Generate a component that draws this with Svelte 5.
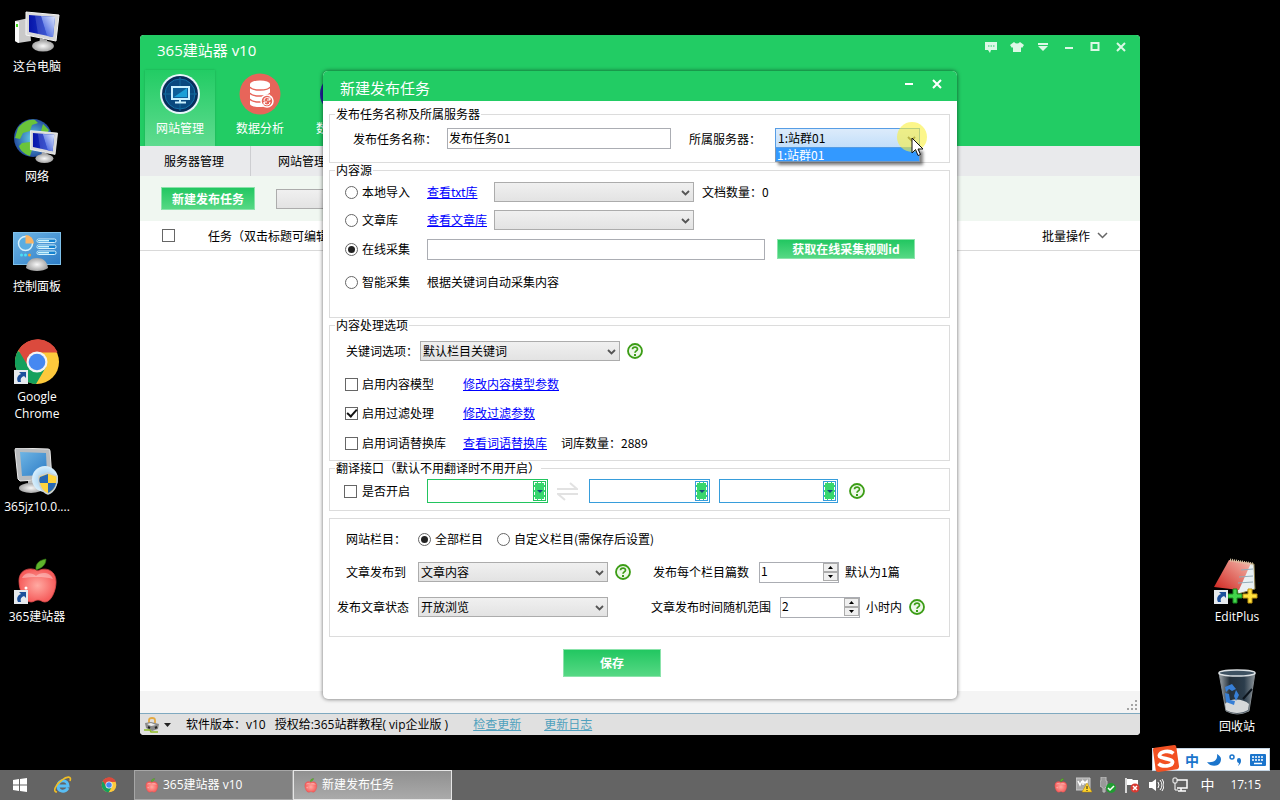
<script>
    let source = $state('online');
    let columns = $state('all');
    let useModel = $state(false);
    let useFilter = $state(true);
    let useReplace = $state(false);
    let useTranslate = $state(false);
    let taskName = $state('发布任务01');
    let perColumn = $state('1');
    let hours = $state('2');

    const shortcuts = [
        { label: '这台电脑', icon: 'computer' },
        { label: '网络', icon: 'network' },
        { label: '控制面板', icon: 'panel' },
        { label: 'Google Chrome', icon: 'chrome', link: true },
        { label: '365jz10.0....', icon: 'installer' },
        { label: '365建站器', icon: 'apple', link: true }
    ];

    const rightShortcuts = [
        { label: 'EditPlus', icon: 'editplus', link: true },
        { label: '回收站', icon: 'bin' }
    ];

    const modules = [
        { label: '网站管理', icon: 'site' },
        { label: '数据分析', icon: 'data' },
        { label: '数据采集', icon: 'collect' }
    ];
</script>

{#snippet monitor()}
    <path d="M3 2 36 5 33 31 3 25Z" fill="#d9d9d9" stroke="#f4f4f4" />
    <path d="M6 5 32 7 30 27 6 22Z" fill="url(#screen)" />
    <path d="M12 5.500 18 6 24 26 15 24Z" fill="#fff" opacity=".15" />
    <path d="M32 7 30 27 24 26 18 6Z" fill="url(#shine)" />
    <path d="M17 28 24 30 24 34 16 34Z" fill="#aaa" />
    <ellipse cx="20" cy="36" rx="11" ry="5.500" fill="url(#metal)" />
{/snippet}

{#snippet chrome()}
    <circle cx="24" cy="24" r="22" fill="#fdc93c" />
    <path d="M24 24 4.900 13A22 22 0 0 0 23 46L33 29Z" fill="#14a05c" />
    <path d="M24 24 5.500 12.200A22 22 0 0 1 44.500 14.500H24Z" fill="#db4a3d" />
    <path d="M5.500 12.200 15 28 24 14H44.500A22 22 0 0 0 5.500 12.200Z" fill="#db4a3d" />
    <circle cx="24" cy="24" r="10.500" fill="#f4f4f4" />
    <circle cx="24" cy="24" r="8.300" fill="#4688f1" />
{/snippet}

{#snippet apple()}
    <path d="M25 13c-6-4-19-3-19 10 0 10 6 21 12 21 3 0 4-2 7-2s4 2 7 2c6 0 11-11 11-20 0-13-12-15-18-11Z" fill="url(#appleFill)" stroke="#e0494a" stroke-width=".8" />
    <path d="M9 20c2-6 10-6 14-2 4-4 14-5 17 3-10-3-22-2-31-1Z" fill="#fff" opacity=".35" />
    <path d="M23 12C22 5 27 2 33 1c0 6-4 9-10 11Z" fill="#5fb32c" stroke="#327713" stroke-width=".6" />
    <circle cx="13" cy="30" r="1.500" fill="#fff" />
{/snippet}

{#snippet bigIcon(name, link)}
    <svg width="48" height="48" viewBox="0 0 48 48" aria-hidden="true">
        {#if name === 'computer'}
            <path d="M2 13 16 10 18 33 5 35 2 33Z" fill="#c9c9c9" />
            <path d="M2 13 6 14 6 35 2 33Z" fill="#fafafa" />
            <rect x="3" y="16" width="2" height="3" fill="#42d81c" />
            <g transform="translate(10 2)">{@render monitor()}</g>
        {:else if name === 'network'}
            <circle cx="20" cy="20" r="19" fill="url(#globe)" />
            <path d="M5 10c5-6 10-9 17-8l3 3-6 2-2 6-7 2-3 6-5-1Z M9 25l8-1 3 5-3 9c-6-2-10-6-11-10Z M30 6l6 6-3 5-5-4Z" fill="#6ac43a" />
            <g transform="translate(15 11) scale(.82)">{@render monitor()}</g>
        {:else if name === 'panel'}
            <rect x="0.500" y="4.500" width="47" height="32" fill="url(#panelFill)" stroke="#7ec0ea" />
            <circle cx="12.500" cy="15.500" r="7" fill="#59ade2" stroke="#d6f1fc" stroke-width="1.500" />
            <path d="M12.500 15.500V7a8.500 8.500 0 0 1 8.500 8.500Z" fill="#f9b566" />
            {#each [11, 17, 23] as y}
                <rect x="24" {y} width="19" height="3.500" rx="1.500" fill="#1583d0" stroke="#d6f1fc" />
                <rect x="25" y={y + 1} width="11" height="1.500" fill="#c9f2fc" />
            {/each}
            <circle cx="8.500" cy="27" r="1.500" fill="#4ae0f4" />
            <circle cx="12.500" cy="27" r="1.500" fill="#4ae0f4" />
            <circle cx="16.500" cy="27" r="1.500" fill="#f9a030" />
            <path d="M13 40c1-7 5-10 11-10s10 3 11 10c-5 4-17 4-22 0Z" fill="url(#metal)" />
        {:else if name === 'chrome'}
            {@render chrome()}
        {:else if name === 'installer'}
            <path d="M2 2Q2 0 4 0L35 1Q37 1 37 3L39 31 7 33 5 31Z" fill="#b9bcbf" stroke="#e9e9e9" />
            <path d="M7 4 33 5 34 27 9 28Z" fill="url(#panelFill)" />
            <path d="M15 33h7v6h-7Z" fill="#bbb" />
            <ellipse cx="18" cy="40" rx="12" ry="5" fill="url(#metal)" />
            <circle cx="32" cy="31" r="13" fill="url(#disc)" />
            <path d="M35 25 44 28C45 37 41 44 35 46 29 44 25 37 26 28Z" fill="#ffd43d" stroke="#c8d0d5" stroke-width="1.500" />
            <path d="M35 26v9h-8c-1-2-1-4 0-6Z M35 35h8c-1 5-4 8-8 10Z" fill="#2768b5" />
        {:else if name === 'apple'}
            {@render apple()}
        {:else if name === 'editplus'}
            <path d="M20 3 41 6 42 31 25 36Z" fill="#e9f0f3" stroke="#8a7a48" />
            <path d="M16 2 38 5 26 32 1 29Z" fill="url(#note)" />
            <path d="M17 2 40 6" stroke="#d8c6a5" stroke-width="3" stroke-dasharray="1 1" />
            <path d="M28 12 40 11M26 19l14-1M25 25l15-1" stroke="#92abb9" />
            <path d="M20 31h4v5h5v4h-5v5h-4v-5h-5v-4h5Z" fill="#42d34b" stroke="#178b1f" />
            <path d="M35 31h4v5h5v4h-5v5h-4v-5h-5v-4h5Z" fill="#ffe13d" stroke="#c29613" />
        {:else}
            <path d="M6 5 42 5 36 43Q24 49 13 43Z" fill="url(#binFill)" stroke="#848b90" />
            <ellipse cx="24" cy="5" rx="18" ry="3" fill="#3e5262" stroke="#dce1e4" stroke-width="1.500" />
            <path d="M12 36c4-6 18-6 24 0l-1 6c-6 4-16 4-22 0Z" fill="#d5d8da" />
            <path d="M12 19l7-3 4 5-4 2-3-2-3 3Z M12 25l4 1 1 6 5 1-1 4-8-3Z M23 22l3 5-3 6-2-5Z" fill="#377fd6" />
            <path d="M30 31 39 21" stroke="#0c141c" stroke-width="2" />
        {/if}
        {#if link}
            <rect x="1" y="32" width="14" height="14" fill="#e6eaee" />
            <path d="M5 44c-2-4 0-7 3-8l-2-2h7v6l-2-2c-3 1-4 3-3 6Z" fill="#1c509c" />
        {/if}
    </svg>
{/snippet}

{#snippet help()}
    <button class="help" type="button" aria-label="帮助">
        <svg width="16" height="16" viewBox="0 0 16 16">
            <circle cx="8" cy="8" r="7" fill="#eef8e9" stroke="#3c9d16" stroke-width="1.800" />
            <path d="M5.500 6.300C5.600 3.300 10.600 3.400 10.500 6.200 10.400 7.800 8 8 8 9.700" fill="none" stroke="#3c9d16" stroke-width="1.700" />
            <rect x="7" y="11" width="2" height="2" fill="#3c9d16" />
        </svg>
    </button>
{/snippet}

{#snippet arrow()}
    <svg class="arrow" width="9" height="6" viewBox="0 0 9 6" aria-hidden="true">
        <path d="M1 1 4.500 4.500 8 1" fill="none" stroke="#555" stroke-width="1.800" />
    </svg>
{/snippet}

{#snippet combo(label, text, size)}
    <span class="combo {size}">
        <select aria-label={label}><option>{text}</option></select>
        {@render arrow()}
    </span>
{/snippet}

{#snippet langBox(label, tone)}
    <span class="lang {tone}">
        <select aria-label={label}><option></option></select>
        <span class="lang-button"></span>
    </span>
{/snippet}

{#snippet spinArrows()}
    <span class="spin-arrows" aria-hidden="true">
        <span><svg width="5" height="3" viewBox="0 0 5 3"><path d="M0 3 2.500 0 5 3Z" /></svg></span>
        <span><svg width="5" height="3" viewBox="0 0 5 3"><path d="M0 0 2.500 3 5 0Z" /></svg></span>
    </span>
{/snippet}

<svg class="defs" width="0" height="0" aria-hidden="true">
    <defs>
        <linearGradient id="screen"><stop stop-color="#0714a8" /><stop offset="1" stop-color="#2148d8" /></linearGradient>
        <linearGradient id="shine" x1="0" y1="1" x2="1" y2="0"><stop stop-color="#2345d8" /><stop offset="1" stop-color="#dfe9ff" /></linearGradient>
        <radialGradient id="metal"><stop stop-color="#f8f8f8" /><stop offset="1" stop-color="#a5a5a5" /></radialGradient>
        <radialGradient id="globe"><stop stop-color="#67d5ec" /><stop offset="1" stop-color="#244ea0" /></radialGradient>
        <radialGradient id="disc"><stop stop-color="#8cc4ee" /><stop offset="1" stop-color="#d9effc" /></radialGradient>
        <radialGradient id="appleFill"><stop stop-color="#ffaaa2" /><stop offset="1" stop-color="#f65d5c" /></radialGradient>
        <linearGradient id="panelFill" x1="0" y1="0" x2="1" y2="1"><stop stop-color="#6fb5e4" /><stop offset="1" stop-color="#2c7cc6" /></linearGradient>
        <linearGradient id="note" x1="1" y1="0" x2="0" y2="1"><stop stop-color="#f5bcb0" /><stop offset="1" stop-color="#cf231d" /></linearGradient>
        <linearGradient id="binFill"><stop stop-color="#a2a9ae" /><stop offset=".3" stop-color="#24303a" /><stop offset=".7" stop-color="#2b3d4c" /><stop offset="1" stop-color="#8d959a" /></linearGradient>
    </defs>
</svg>

<div class="desktop">
    <main class="workspace">
        <nav class="shortcuts">
            {#each shortcuts as item}
                <button type="button" class="shortcut">
                    {@render bigIcon(item.icon, item.link)}
                    <span>{item.label}</span>
                </button>
            {/each}
        </nav>

        <nav class="shortcuts right">
            {#each rightShortcuts as item}
                <button type="button" class="shortcut">
                    {@render bigIcon(item.icon, item.link)}
                    <span>{item.label}</span>
                </button>
            {/each}
        </nav>

        <!-- Main application window -->
        <section class="app-window">
            <header class="app-header">
                <div class="app-title">
                    <h1>365建站器 v10</h1>
                    <div class="window-tools">
                        <button type="button" aria-label="消息"><svg width="12" height="12" viewBox="0 0 12 12"><path d="M0 1h12v8H6l-1 3-2-3H0Z" fill="currentColor" /><path d="M3 5h1.500M5.500 5H7M8 5h1.500" stroke="#22cc64" /></svg></button>
                        <button type="button" aria-label="皮肤"><svg width="14" height="12" viewBox="0 0 14 12"><path d="M4 1q3 3 6 0l4 3-2 3-1-1v5H3V6L2 7 0 4Z" fill="currentColor" /></svg></button>
                        <button type="button" aria-label="菜单"><svg width="10" height="10" viewBox="0 0 10 10"><path d="M0 1h10v2H0ZM0 4h10L5 9Z" fill="currentColor" /></svg></button>
                        <button type="button" aria-label="最小化"><svg width="10" height="10" viewBox="0 0 10 10"><path d="M1 6h8" stroke="currentColor" stroke-width="2" /></svg></button>
                        <button type="button" aria-label="最大化"><svg width="10" height="10" viewBox="0 0 10 10"><rect x="1.500" y="1" width="7" height="7" fill="none" stroke="currentColor" stroke-width="2" /></svg></button>
                        <button type="button" aria-label="关闭"><svg width="10" height="10" viewBox="0 0 10 10"><path d="m1 1 8 8M9 1 1 9" stroke="currentColor" stroke-width="2" /></svg></button>
                    </div>
                </div>
                <nav class="modules">
                    {#each modules as item, index}
                        <button type="button" class:active={index === 0}>
                            <svg width="42" height="42" viewBox="0 0 42 42" aria-hidden="true">
                                {#if item.icon === 'site'}
                                    <circle cx="21" cy="21" r="20" fill="#e8f5fb" />
                                    <circle cx="21" cy="21" r="18" fill="#082e5c" />
                                    <circle cx="21" cy="21" r="15" fill="#09497f" stroke="#1472a8" />
                                    <path d="M21 4v34M4 21h34" stroke="#126a9b" />
                                    <path d="M13 14h17v12H13ZM21 26v3M16 29.500h11" fill="#0d5f98" stroke="#c9f1ff" stroke-width="2" />
                                    <path d="m15 24 13-9v9Z" fill="#1aa0d7" />
                                {:else if item.icon === 'data'}
                                    <circle cx="21" cy="21" r="20.500" fill="#e7655a" />
                                    <path d="M11 11v20c0 4 20 4 20 0V11Z" fill="#fff" />
                                    <ellipse cx="21" cy="11" rx="10" ry="3.500" fill="#fff" />
                                    <path d="M11 14c2 4 18 4 20 0M11 20c2 4 18 4 20 0M11 26c2 4 18 4 20 0" fill="none" stroke="#e7655a" stroke-width="1.500" />
                                    <circle cx="28" cy="28" r="6" fill="#e7655a" stroke="#fff" stroke-width="1.500" />
                                    <path d="M25 28a3 3 0 0 1 6-1M31 29a3 3 0 0 1-6 0M31 24v3h-3M25 32v-3h3" fill="none" stroke="#fff" />
                                {:else}
                                    <circle cx="21" cy="21" r="20" fill="#20219a" />
                                {/if}
                            </svg>
                            <span>{item.label}</span>
                        </button>
                    {/each}
                </nav>
            </header>
            <nav class="subnav">
                <a href="#servers">服务器管理</a>
                <a href="#sites">网站管理</a>
            </nav>
            <div class="toolbar">
                <button type="button" class="green-button new-task">新建发布任务</button>
                <span class="combo wide"><select aria-label="筛选"><option></option></select></span>
            </div>
            <div class="list-head">
                <input type="checkbox" aria-label="全选" />
                <span class="head-title">任务（双击标题可编辑）</span>
                <button type="button" class="batch">批量操作
                    <svg width="11" height="7" viewBox="0 0 11 7"><path d="m1 1 4.500 4.500L10 1" fill="none" stroke="#666" stroke-width="1.500" /></svg>
                </button>
            </div>
            <div class="list-body"></div>
            <div class="grip-row">
                <svg width="11" height="11" viewBox="0 0 11 11" aria-hidden="true"><path d="M8 0h2v2H8ZM8 4h2v2H8ZM8 8h2v2H8ZM4 4h2v2H4ZM4 8h2v2H4ZM0 8h2v2H0Z" fill="#a3a3a3" /></svg>
            </div>
            <footer class="status">
                <button type="button" class="lock" aria-label="授权">
                    <svg width="16" height="16" viewBox="0 0 16 16"><path d="M5 6V3q0-2 3-2t3 2v3" fill="none" stroke="#e3a942" stroke-width="1.800" /><path d="M1 6l6-1 8 2-1 5-6 2-6-3Z" fill="#8a8a8a" /><path d="M3 7l4-1 5 2-5 1Z" fill="#eee" /><path d="m4 10 2 1M11 11l2-1" stroke="#222" stroke-width="2" /><path d="M0 13h6l1 2h7" fill="none" stroke="#90bd27" stroke-width="1.500" /></svg>
                    <svg width="7" height="4" viewBox="0 0 7 4"><path d="M0 0h7L3.500 4Z" fill="#222" /></svg>
                </button>
                <span>软件版本：v10</span>
                <span>授权给:365站群教程( vip企业版 )</span>
                <a href="#update">检查更新</a>
                <a href="#log">更新日志</a>
            </footer>
        </section>

        <!-- New task dialog -->
        <form class="dialog" onsubmit={(e) => e.preventDefault()}>
            <header class="dialog-title">
                <h2>新建发布任务</h2>
                <button type="button" aria-label="最小化"><svg width="10" height="10" viewBox="0 0 10 10"><path d="M1 5h8" stroke="currentColor" stroke-width="2" /></svg></button>
                <button type="button" aria-label="关闭"><svg width="10" height="10" viewBox="0 0 10 10"><path d="m1 1 8 8M9 1 1 9" stroke="currentColor" stroke-width="2" /></svg></button>
            </header>

            <div class="dialog-body">
                <fieldset class="name-group">
                    <legend>发布任务名称及所属服务器</legend>
                    <div class="row">
                        <label class="name-label" for="task-name">发布任务名称：</label>
                        <input id="task-name" class="text name-input" type="text" bind:value={taskName} />
                        <label class="server-label" for="server">所属服务器：</label>
                        <span class="combo server">
                            <select id="server"><option>1:站群01</option></select>
                            {@render arrow()}
                            <ul class="options"><li>1:站群01</li></ul>
                            <span class="click-halo"></span>
                            <svg class="pointer" width="13" height="20" viewBox="0 0 13 20" aria-hidden="true">
                                <path d="M1 1v15l3.500-3.500L7 18.500l2.500-1L7 12h5Z" fill="#fff" stroke="#111" />
                            </svg>
                        </span>
                    </div>
                </fieldset>

                <fieldset class="source-group">
                    <legend>内容源</legend>
                    <div class="row h30">
                        <label class="choice"><input type="radio" value="local" bind:group={source} />本地导入</label>
                        <span class="view-link"><a href="#txt">查看txt库</a></span>
                        {@render combo('txt库', '', 'w200')}
                        <span class="after-combo">文档数量：0</span>
                    </div>
                    <div class="row h26">
                        <label class="choice"><input type="radio" value="library" bind:group={source} />文章库</label>
                        <span class="view-link"><a href="#articles">查看文章库</a></span>
                        {@render combo('文章库', '', 'w200')}
                    </div>
                    <div class="row h32">
                        <label class="choice"><input type="radio" value="online" bind:group={source} />在线采集</label>
                        <input class="text rule-input" type="text" aria-label="在线采集规则" />
                        <button type="button" class="green-button rule-button">获取在线采集规则id</button>
                    </div>
                    <div class="row h34">
                        <label class="choice"><input type="radio" value="smart" bind:group={source} />智能采集</label>
                        <span>根据关键词自动采集内容</span>
                    </div>
                </fieldset>

                <fieldset class="process-group">
                    <legend>内容处理选项</legend>
                    <div class="row h38">
                        <span class="keyword-label">关键词选项：</span>
                        {@render combo('关键词选项', '默认栏目关键词', 'w200')}
                        {@render help()}
                    </div>
                    <div class="row h28">
                        <label class="choice long"><input type="checkbox" bind:checked={useModel} />启用内容模型</label>
                        <a href="#model">修改内容模型参数</a>
                    </div>
                    <div class="row h30">
                        <label class="choice long"><input type="checkbox" bind:checked={useFilter} />启用过滤处理</label>
                        <a href="#filter">修改过滤参数</a>
                    </div>
                    <div class="row h30">
                        <label class="choice long"><input type="checkbox" bind:checked={useReplace} />启用词语替换库</label>
                        <a href="#words">查看词语替换库</a>
                        <span class="word-count">词库数量：2889</span>
                    </div>
                </fieldset>

                <fieldset class="translate-group">
                    <legend>翻译接口（默认不用翻译时不用开启）</legend>
                    <div class="row h32">
                        <label class="choice"><input type="checkbox" bind:checked={useTranslate} />是否开启</label>
                        {@render langBox('源语言', 'green')}
                        <svg class="swap" width="21" height="19" viewBox="0 0 21 19" aria-hidden="true">
                            <path d="M0 7h20L13 1M21 12H1l7 6" fill="none" stroke="#e2e2e2" stroke-width="2" />
                        </svg>
                        {@render langBox('中间语言', 'blue')}
                        {@render langBox('目标语言', 'blue last')}
                        {@render help()}
                    </div>
                </fieldset>

                <fieldset class="publish-group">
                    <div class="row h34">
                        <span class="publish-label inset">网站栏目：</span>
                        <label class="choice auto"><input type="radio" value="all" bind:group={columns} />全部栏目</label>
                        <label class="choice auto"><input type="radio" value="custom" bind:group={columns} />自定义栏目(需保存后设置)</label>
                    </div>
                    <div class="row h32">
                        <span class="publish-label inset">文章发布到</span>
                        {@render combo('文章发布到', '文章内容', 'w190')}
                        {@render help()}
                        <label class="count-label" for="per-column">发布每个栏目篇数</label>
                        <span class="spin"><input id="per-column" type="text" bind:value={perColumn} />{@render spinArrows()}</span>
                        <span class="unit">默认为1篇</span>
                    </div>
                    <div class="row h38">
                        <span class="publish-label">发布文章状态</span>
                        {@render combo('发布文章状态', '开放浏览', 'w190')}
                        <label class="time-label" for="hours">文章发布时间随机范围</label>
                        <span class="spin"><input id="hours" type="text" bind:value={hours} />{@render spinArrows()}</span>
                        <span class="unit">小时内</span>
                        {@render help()}
                    </div>
                </fieldset>

                <button type="submit" class="green-button save">保存</button>
            </div>
        </form>

        <!-- Input method bar -->
        <aside class="ime">
            <svg class="ime-logo" width="28" height="28" viewBox="0 0 30 30" aria-hidden="true">
                <path d="M1 5Q1 3 3 3L24 0Q26 0 26 2L29 23Q29 25 27 26L7 29Q5 29 4 27Z" fill="#f25022" />
                <path d="M23 9C18 5 9 7 8 11c-1 4 14 3 14 7 0 5-11 6-15 2" fill="none" stroke="#fff" stroke-width="4" />
            </svg>
            <b>中</b>
            <svg width="14" height="14" viewBox="0 0 14 14"><path d="M10 1c1 6-3 9-10 8 4 6 14 5 14-3 0-2-2-4-4-5Z" fill="#1b75cc" /></svg>
            <svg width="13" height="12" viewBox="0 0 13 12"><circle cx="3" cy="3" r="2" fill="none" stroke="#1b75cc" stroke-width="1.500" /><path d="M8 6q0-2 2-2t2 3q0 3-3 5 1-2 1-3-2 0-2-3Z" fill="#1b75cc" /></svg>
            <svg width="16" height="12" viewBox="0 0 16 12"><rect width="16" height="12" rx="1" fill="#1b75cc" /><path d="M2 3h12M2 6h12" stroke="#fff" stroke-width="1.500" stroke-dasharray="2 1" /><path d="M4 9.500h8" stroke="#fff" stroke-width="1.500" /></svg>
        </aside>
    </main>

    <footer class="taskbar">
        <button type="button" class="quick" aria-label="开始">
            <svg width="14" height="14" viewBox="0 0 14 14"><path d="M0 2 6 1v5.500H0ZM7 1l7-1v6.500H7ZM0 7.500h6V13L0 12ZM7 7.500h7V14l-7-1Z" fill="#fff" /></svg>
        </button>
        <button type="button" class="quick" aria-label="Internet Explorer">
            <svg width="18" height="18" viewBox="0 0 18 18"><path d="M14 12c-3 5-10 4-10-2 0-7 10-7 10 0H4" fill="none" stroke="#58bdf3" stroke-width="3" /><path d="M3 16c-5 0-1-8 5-12 5-4 10-4 8 1" fill="none" stroke="#f1be24" stroke-width="1.600" /></svg>
        </button>
        <button type="button" class="quick" aria-label="Chrome">
            <svg width="16" height="16" viewBox="0 0 48 48">{@render chrome()}</svg>
        </button>
        <button type="button" class="task"><svg width="14" height="15" viewBox="4 0 42 46">{@render apple()}</svg>365建站器 v10</button>
        <button type="button" class="task active"><svg width="14" height="15" viewBox="4 0 42 46">{@render apple()}</svg>新建发布任务</button>
        <div class="tray">
            <svg width="14" height="15" viewBox="4 0 42 46">{@render apple()}</svg>
            <svg width="16" height="16" viewBox="0 0 16 16"><path d="M0 1h14v12H0Z" fill="#aaa" stroke="#ccc" /><path d="m2 4 2 4 2-4M7 8V4l2 2 2-2v4" fill="none" stroke="#fff" stroke-width="1.500" /><path d="m11 6 5 9H6Z" fill="#ffd52d" stroke="#b88700" stroke-width=".5" /><path d="M11 9v3M11 13v1" stroke="#222" /></svg>
            <svg width="16" height="16" viewBox="0 0 16 16"><path d="M1 0h5v4h1v5L5 11v4H3v-4L0 9V4h1Z" fill="#999" stroke="#bbb" /><circle cx="11" cy="11" r="5" fill="#209d31" /><path d="m8 11 2 2 4-4" fill="none" stroke="#fff" stroke-width="1.500" /></svg>
            <svg width="16" height="16" viewBox="0 0 16 16"><path d="M2 1v15" stroke="#fff" stroke-width="1.500" /><path d="M3 2h5l1 1h5v6H9L8 8H3Z" fill="#fff" /><circle cx="11" cy="11" r="4.500" fill="#d93a32" /><path d="m9 9 4 4M13 9l-4 4" stroke="#fff" stroke-width="1.500" /></svg>
            <svg width="16" height="16" viewBox="0 0 16 16"><path d="M1 5h3l4-3v12l-4-3H1Z" fill="#fff" /><path d="M10 5q2 3 0 6M12 3q4 5 0 10M14 2q4 6 0 12" fill="none" stroke="#fff" /></svg>
            <svg width="16" height="16" viewBox="0 0 16 16"><path d="M5 3h10v8H5M9 11v3M6 14h8" fill="none" stroke="#fff" stroke-width="1.500" /><rect x="1" y="1" width="4" height="5" rx="1" fill="#666" stroke="#fff" /><path d="M3 6v7h3" fill="none" stroke="#fff" /></svg>
            <span class="ime-mode">中</span>
            <time>17:15</time>
        </div>
    </footer>
</div>

<style>
    :global(body) {
        margin: 0;
        background: #000;
    }

    * {
        box-sizing: border-box;
    }

    .defs {
        position: absolute;
    }

    .desktop {
        display: flex;
        flex-direction: column;
        height: 100vh;
        overflow: hidden;
        background: #000;
        color: #000;
        font: 12px/16px "Noto Sans CJK SC", sans-serif;
    }

    button,
    input,
    select {
        margin: 0;
        padding: 0;
        border: 0;
        border-radius: 0;
        background: none;
        color: inherit;
        font: inherit;
    }

    svg {
        display: block;
        flex-shrink: 0;
    }

    .workspace {
        position: relative;
        flex: 1;
        min-height: 0;
    }

    /* Desktop shortcuts */
    .shortcuts {
        display: flex;
        flex-direction: column;
        width: 74px;
        padding-top: 2px;
    }

    .shortcuts.right {
        position: absolute;
        top: 550px;
        right: 6px;
    }

    .shortcut {
        display: flex;
        flex-direction: column;
        align-items: center;
        gap: 2px;
        height: 110px;
        padding-top: 6px;
        color: #fff;
        font: 12px/17px "Open Sans", "Noto Sans CJK SC", sans-serif;
    }

    /* Application window */
    .app-window {
        position: absolute;
        inset: 35px 140px;
        display: flex;
        flex-direction: column;
        overflow: hidden;
        border-radius: 4px;
        background: #fff;
    }

    .app-header {
        height: 111px;
        background: #22cc64;
        color: #fff;
    }

    .app-title {
        display: flex;
        align-items: flex-start;
        justify-content: space-between;
        height: 35px;
        padding: 5px 12px 0 17px;
    }

    h1,
    h2 {
        margin: 0;
        font: 15px/20px "Open Sans", "Noto Sans CJK SC", sans-serif;
    }

    .window-tools {
        display: flex;
        gap: 11px;
        color: #dcf8e6;
    }

    .window-tools button,
    .dialog-title button {
        display: flex;
        align-items: center;
        justify-content: center;
        width: 15px;
        height: 14px;
    }

    .modules {
        display: flex;
        gap: 10px;
        padding-left: 5px;
    }

    .modules button {
        display: flex;
        flex-direction: column;
        align-items: center;
        gap: 5px;
        width: 70px;
        height: 76px;
        padding: 3px 0 0;
    }

    .modules .active {
        background: linear-gradient(#22cc64, #5fdb8f);
        box-shadow: 0 0 2px #1ba851;
    }

    .subnav {
        display: flex;
        height: 30px;
        background: #e9eaec;
    }

    .subnav a {
        padding: 7px 26px 7px 24px;
        border-right: 1px solid #cdced1;
        color: #000;
        text-decoration: none;
    }

    .subnav a:last-child {
        padding-left: 27px;
    }

    .toolbar {
        display: flex;
        align-items: center;
        gap: 21px;
        height: 45px;
        padding-left: 21px;
        background: #f0f7f1;
    }

    .green-button {
        border: 1px solid #8be3ab;
        background: linear-gradient(#22c761, #56d884);
        color: #fff;
        font-weight: 700;
    }

    .new-task {
        width: 94px;
        height: 23px;
    }

    .list-head {
        display: flex;
        align-items: center;
        height: 30px;
        padding: 0 32px 0 22px;
        border-bottom: 1px solid #d9d9d9;
    }

    .head-title {
        flex: 1;
        margin-left: 33px;
    }

    .batch {
        display: flex;
        align-items: center;
        gap: 7px;
    }

    .list-body {
        flex: 1;
    }

    .grip-row {
        display: flex;
        align-items: flex-end;
        justify-content: flex-end;
        height: 22px;
        padding: 2px;
        background: #f4f4f4;
    }

    .status {
        display: flex;
        align-items: center;
        height: 22px;
        padding-left: 4px;
        border-top: 1px solid #7fa9c0;
        background: #e0e0e0;
        font-family: "Open Sans", "Noto Sans CJK SC", sans-serif;
    }

    .lock {
        display: flex;
        align-items: center;
        gap: 4px;
        width: 42px;
    }

    .status span {
        margin-right: 9px;
    }

    .status a {
        margin: 0 7px 0 16px;
        color: #4fa0bd;
    }

    /* Dialog */
    .dialog {
        position: absolute;
        top: 71px;
        left: 50%;
        width: 634px;
        transform: translateX(-50%);
        border-radius: 5px;
        background: #fff;
        box-shadow: 0 0 4px rgba(0, 0, 0, 0.6);
    }

    .dialog-title {
        display: flex;
        gap: 13px;
        height: 30px;
        padding: 6px 13px 0 17px;
        border-radius: 5px 5px 0 0;
        background: #22cc64;
        color: #fff;
    }

    .dialog-title h2 {
        flex: 1;
        line-height: 22px;
    }

    .dialog-body {
        padding: 6px 7px 22px 6px;
    }

    fieldset {
        min-width: 0;
        margin: 0;
        padding: 0;
        border: 1px solid #dcdcdc;
    }

    legend {
        margin-left: 5px;
        padding: 0 1px;
        line-height: 14px;
    }

    .row {
        display: flex;
        align-items: center;
        padding-left: 15px;
    }

    .name-group {
        padding: 7px 0 13px;
    }

    .name-group .row {
        align-items: flex-start;
        padding-left: 23px;
    }

    .name-group label {
        line-height: 21px;
    }

    .source-group {
        padding-bottom: 18px;
    }

    .process-group {
        padding-bottom: 2px;
    }

    .translate-group {
        padding-bottom: 3px;
    }

    .translate-group .row {
        padding-left: 14px;
    }

    .publish-group {
        margin-top: 7px;
        padding: 3px 0 10px;
    }

    .publish-group .row {
        padding-left: 7px;
    }

    .h26 { height: 26px; }
    .h28 { height: 28px; }
    .h30 { height: 30px; }
    .h32 { height: 32px; }
    .h34 { height: 34px; }
    .h38 { height: 38px; }

    .dialog a {
        color: #00f;
    }

    .name-label {
        width: 94px;
    }

    .server-label {
        width: 86px;
        margin-left: 18px;
    }

    .text {
        height: 21px;
        padding: 0 1px 3px;
        border: 1px solid #abadb3;
        background: #fff;
    }

    .name-input {
        width: 224px;
    }

    .rule-input {
        width: 338px;
    }

    .rule-button {
        width: 138px;
        height: 20px;
        margin-left: 12px;
        line-height: 18px;
    }

    .choice {
        display: flex;
        align-items: center;
        gap: 4px;
        width: 82px;
    }

    .choice.long {
        width: 118px;
    }

    .translate-group .choice {
        width: 83px;
        gap: 5px;
    }

    .choice.auto {
        width: auto;
        margin-right: 14px;
    }

    input[type='radio'],
    input[type='checkbox'] {
        display: grid;
        place-items: center;
        width: 13px;
        height: 13px;
        appearance: none;
        border: 1px solid #666;
        background: #fff;
    }

    input[type='radio'] {
        border-radius: 50%;
    }

    input[type='radio']:checked::after {
        width: 7px;
        height: 7px;
        border-radius: 50%;
        background: #222;
        content: '';
    }

    input[type='checkbox']:checked::after {
        width: 8px;
        height: 4px;
        margin-bottom: 3px;
        border: solid #111;
        border-width: 0 0 2px 2px;
        transform: rotate(-48deg);
        content: '';
    }

    .view-link {
        width: 67px;
    }

    .after-combo {
        margin-left: 8px;
    }

    .combo {
        position: relative;
        height: 20px;
    }

    .combo select {
        display: block;
        width: 100%;
        height: 100%;
        padding: 0 16px 0 2px;
        appearance: none;
        border: 1px solid #acacac;
        background: linear-gradient(#f0f0f0, #e3e3e3);
    }

    .arrow {
        position: absolute;
        top: 8px;
        right: 4px;
        pointer-events: none;
    }

    .w190 { width: 190px; }
    .w200,
    .wide { width: 200px; }

    .server {
        width: 145px;
    }

    .server select {
        border-color: #569de5;
        background: linear-gradient(#dcebfb, #c3dffa);
    }

    .options {
        position: absolute;
        top: 20px;
        left: 0;
        z-index: 1;
        width: 100%;
        margin: 0;
        padding: 0 1px;
        border: solid #7b97b5;
        border-width: 0 1px 1px;
        background: #3399ff;
        box-shadow: 3px 3px 3px rgba(0, 0, 0, 0.5);
        color: #fff;
        line-height: 13px;
        list-style: none;
    }

    .click-halo {
        position: absolute;
        top: -6px;
        right: -7px;
        z-index: 2;
        width: 30px;
        height: 30px;
        border-radius: 50%;
        background: rgba(250, 240, 60, 0.6);
    }

    .pointer {
        position: absolute;
        top: 9px;
        right: -4px;
        z-index: 3;
    }

    .keyword-label {
        width: 75px;
        padding-left: 1px;
    }

    .help {
        margin-left: 7px;
    }

    .word-count {
        margin-left: 14px;
    }

    .lang {
        position: relative;
        width: 121px;
        height: 24px;
        padding: 1px;
        border: 1px solid #22c45f;
    }

    .lang.blue {
        border-color: #379ddb;
    }

    .lang.last {
        width: 119px;
        margin: 0 4px 0 9px;
    }

    .lang select {
        width: 100%;
        height: 100%;
        appearance: none;
    }

    .lang-button {
        position: absolute;
        top: 2px;
        right: 2px;
        display: grid;
        place-items: center;
        width: 11px;
        height: 18px;
        border: 1px dashed #fff;
        outline: 1px solid #22c45f;
        background: #38d66e;
        pointer-events: none;
    }

    .blue .lang-button {
        outline-color: #379ddb;
    }

    .lang-button::after {
        border: solid transparent;
        border-width: 3px 3px 0;
        border-top-color: #15507c;
        content: '';
    }

    .swap {
        margin: 0 11px 0 9px;
    }

    .publish-label {
        width: 81px;
        white-space: nowrap;
    }

    .publish-label.inset {
        padding-left: 9px;
    }

    .count-label {
        width: 106px;
        margin-left: 22px;
    }

    .time-label {
        width: 129px;
        margin-left: 43px;
    }

    .spin {
        display: flex;
        width: 80px;
        height: 21px;
        border: 1px solid #abadb3;
    }

    .spin input {
        flex: 1;
        min-width: 0;
        padding: 0 0 3px 1px;
    }

    .spin-arrows {
        display: flex;
        flex-direction: column;
        width: 15px;
        height: 18px;
    }

    .spin-arrows span {
        display: grid;
        flex: 1;
        place-items: center;
        border: 1px solid #acacac;
        background: #efefef;
    }

    .unit {
        margin-left: 6px;
    }

    .save {
        display: block;
        width: 98px;
        height: 28px;
        margin: 12px 0 0 234px;
    }

    /* Input method bar */
    .ime {
        position: absolute;
        right: 10px;
        bottom: -1px;
        display: flex;
        align-items: center;
        gap: 8px;
        height: 23px;
        padding: 0 3px 0 32px;
        border: 1px solid #c4d5e4;
        background: #fff;
        color: #1b75cc;
    }

    .ime-logo {
        position: absolute;
        top: -4px;
        left: -1px;
    }

    .ime b {
        font-size: 14px;
    }

    /* Taskbar */
    .taskbar {
        display: flex;
        height: 30px;
        background: #646464;
        color: #fff;
        font-family: "Open Sans", "Noto Sans CJK SC", sans-serif;
    }

    .quick {
        display: grid;
        place-items: center;
        width: 46px;
    }

    .quick:first-child {
        width: 40px;
    }

    .quick:nth-child(3) {
        margin-right: 2px;
    }

    .task {
        display: flex;
        align-items: center;
        gap: 4px;
        width: 159px;
        padding-left: 10px;
        border: 1px solid #a6a6a6;
        background: #828282;
    }

    .task.active {
        border-color: #e6e6e6;
        background: linear-gradient(#909090, #aaa);
    }

    .tray {
        display: flex;
        align-items: center;
        gap: 8px;
        margin-left: auto;
        padding-right: 19px;
    }

    .ime-mode {
        margin: 0 8px 0 4px;
        font-size: 14px;
    }
</style>
